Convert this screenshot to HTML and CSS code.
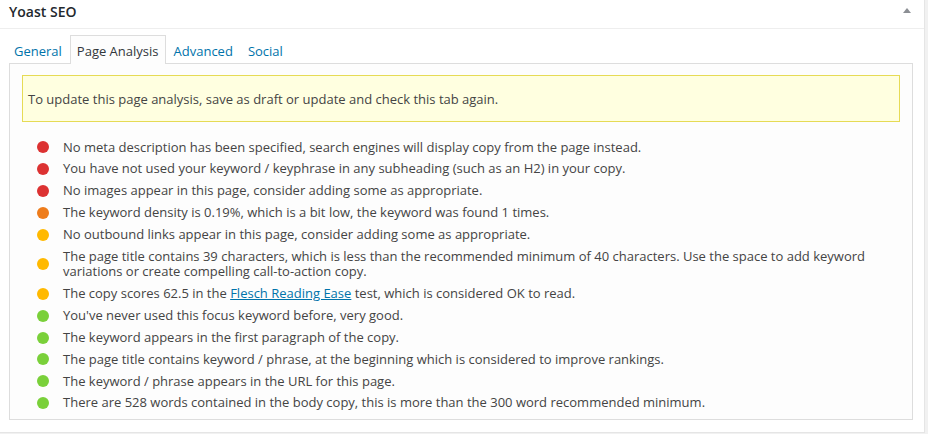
FILE: index.html
```html
<!DOCTYPE html>
<html>
<head>
<meta charset="utf-8">
<link rel="stylesheet" href="styles.css">
</head>
<body>
<div class="postbox">
  <div class="hndle">
    <h2 class="title">Yoast SEO</h2>
    <span class="toggle"></span>
  </div>
  <div class="inside">
    <ul class="tabs">
      <li class="tab">General</li>
      <li class="tab active">Page Analysis</li>
      <li class="tab">Advanced</li>
      <li class="tab">Social</li>
    </ul>
    <div class="panel">
      <div class="notice">To update this page analysis, save as draft or update and check this tab again.</div>
      <ul class="results">
        <li><span class="dot bad"></span><span class="txt">No meta description has been specified, search engines will display copy from the page instead.</span></li>
        <li><span class="dot bad"></span><span class="txt">You have not used your keyword / keyphrase in any subheading (such as an H2) in your copy.</span></li>
        <li><span class="dot bad"></span><span class="txt">No images appear in this page, consider adding some as appropriate.</span></li>
        <li><span class="dot poor"></span><span class="txt">The keyword density is 0.19%, which is a bit low, the keyword was found 1 times.</span></li>
        <li><span class="dot ok"></span><span class="txt">No outbound links appear in this page, consider adding some as appropriate.</span></li>
        <li><span class="dot ok"></span><span class="txt">The page title contains 39 characters, which is less than the recommended minimum of 40 characters. Use the space to add keyword variations or create compelling call-to-action copy.</span></li>
        <li><span class="dot ok"></span><span class="txt">The copy scores 62.5 in the <a href="#">Flesch Reading Ease</a> test, which is considered OK to read.</span></li>
        <li><span class="dot good"></span><span class="txt">You've never used this focus keyword before, very good.</span></li>
        <li><span class="dot good"></span><span class="txt">The keyword appears in the first paragraph of the copy.</span></li>
        <li><span class="dot good"></span><span class="txt">The page title contains keyword / phrase, at the beginning which is considered to improve rankings.</span></li>
        <li><span class="dot good"></span><span class="txt">The keyword / phrase appears in the URL for this page.</span></li>
        <li><span class="dot good"></span><span class="txt">There are 528 words contained in the body copy, this is more than the 300 word recommended minimum.</span></li>
      </ul>
    </div>
  </div>
</div>
</body>
</html>
```

FILE: styles.css
```css
html, body {
  margin: 0;
  padding: 0;
  background: #f1f1f1;
}
body {
  font-family: "Open Sans", "Noto Sans", sans-serif;
  font-size: 13px;
  color: #444;
}
.postbox {
  width: 924px;
  height: 432px;
  background: #fff;
  border-right: 1px solid #e5e5e5;
  border-bottom: 1px solid #e5e5e5;
  box-sizing: content-box;
}
.hndle {
  height: 29px;
  border-bottom: 1px solid #eee;
  display: flex;
  justify-content: space-between;
  padding: 0 13px 0 9px;
  box-sizing: border-box;
}
.title {
  margin: 0;
  font-size: 14px;
  font-weight: 600;
  line-height: 24px;
  color: #23282d;
}
.toggle {
  width: 0;
  height: 0;
  margin-top: 8px;
  border-left: 4px solid transparent;
  border-right: 4px solid transparent;
  border-bottom: 5px solid #8c8f94;
}
.inside {
  padding-top: 6px;
}
.tabs {
  list-style: none;
  margin: 0;
  padding: 0 0 0 7px;
  display: flex;
  height: 28px;
}
.tab {
  height: 28px;
  box-sizing: border-box;
  border: 1px solid transparent;
  border-bottom: none;
  padding: 3px 6px 0;
  line-height: 24px;
  margin-right: 1px;
  color: #0073aa;
}
.tab.active {
  border-color: #ddd;
  background: #fdfdfd;
  color: #32373c;
  position: relative;
  z-index: 1;
  height: 29px;
}
.panel {
  margin-left: 9px;
  width: 904px;
  height: 357px;
  box-sizing: border-box;
  border: 1px solid #ddd;
  background: #fdfdfd;
  padding: 11px 12px 0 12px;
}
.notice {
  background: #ffffe0;
  border: 1px solid #e6db55;
  padding: 15px 5px 13px;
  line-height: 17px;
}
.results {
  list-style: none;
  margin: 17.5px 0 0 0;
  padding: 0 0 0 15px;
}
.results li {
  display: flex;
  align-items: center;
  line-height: 15.6px;
  margin-bottom: 6.25px;
}
.dot {
  flex: none;
  width: 12px;
  height: 12px;
  border-radius: 50%;
  margin-right: 14px;
}
.bad { background: #dc3232; }
.poor { background: #ee7c1b; }
.ok { background: #ffb900; }
.good { background: #7ad03a; }
.results a {
  color: #0073aa;
}
```
